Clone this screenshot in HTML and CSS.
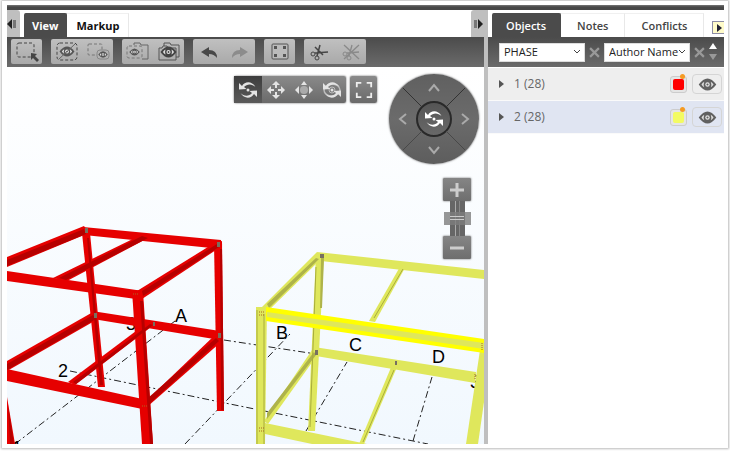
FILE: index.html
```html
<!DOCTYPE html>
<html lang="en">
<head>
<meta charset="utf-8">
<title>Model viewer</title>
<link rel="stylesheet" href="styles.css">
</head>
<body>
<svg class="defs" aria-hidden="true">
  <symbol id="orbit" viewBox="0 0 20 20">
    <path d="M4 6C7 1 14 1 17.500 7C14 3.500 9 3.500 6 7L8.500 9L1 9.500V3Z"/>
    <path d="M16 14C13 19 6 19 2.500 13C6 16.500 11 16.500 14 13L11.500 11L19 10.500V17Z"/>
    <circle cx="10" cy="10" r="1.500"/>
  </symbol>
  <symbol id="eye" viewBox="0 0 20 14">
    <path d="M0.500 7Q10-6 19.500 7Q10 20 0.500 7Z"/>
    <path d="M3.500 7Q4.500 5 6.500 4Q5.300 7 6.500 10Q4.500 9 3.500 7ZM16.500 7Q15.500 5 13.500 4Q14.700 7 13.500 10Q15.500 9 16.500 7Z" fill="#ddd"/>
    <circle cx="10" cy="7" r="2.400" fill="#e4e4e4"/>
    <circle cx="10" cy="7" r="1.100"/>
  </symbol>
</svg>
<div class="frame">
  <div class="topbar"></div>
  <main class="app">
    <section class="model">
      <header class="tabs">
        <button class="collapse left" aria-label="Collapse left panel"><svg width="11" height="12" viewBox="0 0 11 12"><path d="M5 1V11L0 6Z" fill="#222"/><path d="M6 2h3v8H6z" fill="#777"/></svg></button>
        <button class="tab active">View</button>
        <button class="tab">Markup</button>
        <button class="collapse right" aria-label="Collapse right panel"><svg width="11" height="12" viewBox="0 0 11 12"><path d="M1 2h3v8H1z" fill="#777"/><path d="M5 1V11L10 6Z" fill="#222"/></svg></button>
      </header>
      <div class="toolbar">
        <div class="group">
          <button aria-label="Select area"><svg viewBox="0 0 24 20"><rect x="2" y="1" width="17" height="14" rx="2" class="dash"/><path d="M16 11l6 1-2 2 4 4-2 2-4-4-2 2z" fill="#444"/></svg></button>
        </div>
        <div class="group">
          <button aria-label="Hide selected"><svg viewBox="0 0 24 20"><rect x="2" y="1" width="20" height="17" rx="3" class="dash"/><use href="#eye" x="4" y="4" width="16" height="11" fill="#555"/><path d="M4 17L20 2" stroke="#666"/></svg></button>
          <button aria-label="Show selected only"><svg viewBox="0 0 24 20"><rect x="2" y="2" width="14" height="11" rx="1" class="dash soft"/><rect x="11" y="8" width="12" height="9" rx="3" fill="#b3b3b3" stroke="#888"/><use href="#eye" x="12" y="9" width="10" height="7" fill="#555"/></svg></button>
        </div>
        <div class="group">
          <button aria-label="Toggle ghost view"><svg viewBox="0 0 24 20"><path d="M8 3V1h6l1 2h7v14h-6" fill="none" stroke="#666"/><rect x="1" y="4" width="15" height="12" rx="2" class="dash soft"/><use href="#eye" x="3" y="6" width="11" height="8" fill="#555"/></svg></button>
          <button aria-label="Show all"><svg viewBox="0 0 24 20"><path d="M7 4V1h6l1 2h8v12h-3M2 6h3l1-2h4l1 2h8v12H2z" fill="none" stroke="#555"/><use href="#eye" x="3" y="4" width="17" height="12" fill="#444"/></svg></button>
        </div>
        <div class="group">
          <button aria-label="Undo"><svg viewBox="0 0 24 20"><path d="M4 10L12 5V8Q20 8 20 16Q17 12 12 12V15Z" fill="#484848"/></svg></button>
          <button aria-label="Redo"><svg viewBox="0 0 24 20"><path d="M20 10L12 5V8Q4 8 4 16Q7 12 12 12V15Z" fill="#8c8c8c"/></svg></button>
        </div>
        <div class="group">
          <button aria-label="Fit to view"><svg viewBox="0 0 24 20"><rect x="4" y="2" width="16" height="15" rx="1" fill="#bbb" stroke="#555"/><path d="M6 4h3v3H6zM15 4h3v3h-3zM6 12h3v3H6zM15 12h3v3h-3z" fill="#555"/></svg></button>
        </div>
        <div class="group">
          <button aria-label="Clip plane"><svg viewBox="0 0 24 20" fill="none" stroke="#444"><circle cx="5" cy="12" r="2"/><circle cx="9" cy="16" r="2"/><path d="M7 11L20 10M9 14L12 3M7 5l8 8" stroke-width="1.500"/></svg></button>
          <button aria-label="Clear clip planes"><svg viewBox="0 0 24 20" fill="none" stroke="#898989"><circle cx="6" cy="12" r="2"/><circle cx="10" cy="16" r="2"/><path d="M8 11L20 10M10 14L13 3M5 3L20 17M5 17L20 3" stroke-width="1.300"/></svg></button>
        </div>
      </div>
      <div class="viewport">
        <svg class="scene" viewBox="7 67 477 377" preserveAspectRatio="xMinYMin slice" role="img" aria-label="Steel frames of phases 1 and 2">
          <g class="axes">
            <path d="M70 371L220 402L428 444M224 340L316 354M15 444L175 321M185 444L290 334M306 431L347 362M413 441L432 377"/>
          </g>
          <g class="label">
            <text x="175" y="322">A</text><text x="276" y="339">B</text><text x="349" y="351">C</text><text x="432" y="363">D</text><text x="58" y="377">2</text><text x="126" y="330">3</text><text x="12" y="454">1</text><text x="470" y="388">3</text>
          </g>
          <g fill="#e60000">
            <path d="M82 233L90 233L105 387L98 387Z"/>
            <path d="M7 257L84 226L89 233L7 267Z"/>
            <path d="M83 227L221 240V249L84 235Z"/>
            <path d="M53 278L141 235L150 237L67 281Z"/>
            <path d="M7 361L93 312L98 319L7 371Z"/>
            <path d="M92 311L220 331V340L93 319Z"/>
            <path d="M68 382L148 322L155 324L75 385Z"/>
            <path d="M214 243L222 241L224 411L217 411Z"/>
            <path d="M137 291L216 242L222 246L142 299Z"/>
            <path d="M145 402L215 335L221 342L147 407Z"/>
            <path d="M7 369L147 400V410L7 381Z"/>
            <path d="M7 271L143 291V300L7 281Z"/>
            <path d="M132 290L143 291L153 444H142Z"/>
            <path d="M7 397L15 444H7Z"/>
          </g>
          <g fill="#b60000">
            <path d="M7 260L84 229L86 234L7 266Z"/>
            <path d="M59 278L142 236L148 238L66 280Z"/>
            <path d="M7 364L93 315L96 319L7 370Z"/>
            <path d="M73 382L150 324L153 325L76 384Z"/>
            <path d="M142 291L217 244L219 247L143 296Z"/>
            <path d="M148 398L216 338L219 341L148 405Z"/>
            <path d="M87 238L89 238L103 385H100ZM220 249L222 249L224 410H221ZM140 301L143 301L153 444H150ZM8 405L14 444H10Z"/>
          </g>
          <g fill="#dfe75c">
            <path d="M316 254L324 254L315 431L308 431Z"/>
            <path d="M262 307L317 252L323 257L269 310Z"/>
            <path d="M317 252L484 270V279L321 261Z"/>
            <path d="M369 321L401 265L406 266L375 322Z"/>
            <path d="M264 421L312 350L318 354L268 424Z"/>
            <path d="M314 347L476 372L475 383L316 356Z"/>
            <path d="M359 444L392 365L397 367L364 444Z"/>
            <path d="M480 350L484 349V402L478 444H466Z"/>
            <path d="M256 307H267L265 444H256Z"/>
            <path d="M265 423L367 444H312L265 434Z"/>
          </g>
          <path fill="#aeb34a" d="M267 304L316 258L319 259L269 308ZM267 413L314 352L316 355L267 419ZM321 258L324 258L322 308H320Z"/>
          <path d="M374 318L403 269M363 442L394 370M316 267L310 427M257 310V444M264 314L264 444" stroke="#a8ad3c" fill="none"/>
          <path fill="#ffff00" d="M266 307L484 339V353L266 321Z"/>
          <path fill="#dfe75c" d="M267 312L484 343V349L267 317Z"/>
          <g fill="#777060"><path d="M85 228h3v5h-3zM94 313h3v5h-3zM217 242h3v5h-3zM218 333h3v5h-3zM153 322h2v4h-2zM320 254h4v4h-4zM315 350h3v5h-3zM395 361h2v4h-2z"/></g>
          <g fill="none" stroke="#aa6820" stroke-dasharray="1 1"><path d="M133 294h5M142 406h5M259 312h6M259 315h6M259 428h6M259 431h6M482 343v7M475 374v6"/></g>
        </svg>
        <div class="navmodes">
          <div class="modes">
            <button class="on" aria-label="Orbit"><svg viewBox="0 0 20 20"><use href="#orbit"/></svg></button>
            <button aria-label="Pan"><svg viewBox="0 0 20 20"><path d="M10 1L14 5H11V8H9V5H6ZM10 19L6 15H9V12H11V15H14ZM1 10L5 6V9H8V11H5V14ZM19 10L15 14V11H12V9H15V6Z"/></svg></button>
            <button aria-label="Look around"><svg viewBox="0 0 20 20"><path d="M10 1L13 5H7ZM10 19L7 15H13ZM1 10L5 6V14ZM19 10L15 14V6Z"/><circle cx="10" cy="10" r="4" fill="#aaa"/></svg></button>
            <button aria-label="Orbit around point"><svg viewBox="0 0 20 20"><ellipse cx="10" cy="10" rx="8" ry="6" fill="none" stroke="#bbb" stroke-width="1.500"/><circle cx="10" cy="10" r="3" fill="none" stroke="#bbb"/><use href="#orbit"/></svg></button>
          </div>
          <button class="full" aria-label="Full screen"><svg viewBox="0 0 20 20"><path d="M2 7V2H7M13 2H18V7M18 13V18H13M7 18H2V13" fill="none" stroke="#eee" stroke-width="2"/></svg></button>
        </div>
        <div class="wheel">
          <svg class="spokes" viewBox="0 0 90 90"><path d="M14 14L33 33M76 14L57 33" stroke="#333"/><path d="M14 76L33 57M76 76L57 57" stroke="#484848"/></svg>
          <button class="up" aria-label="Rotate up"><svg viewBox="0 0 12 12"><path d="M1 9L6 3L11 9"/></svg></button>
          <button class="lt" aria-label="Rotate left"><svg viewBox="0 0 12 12"><path d="M9 1L3 6L9 11"/></svg></button>
          <button class="hub" aria-label="Reset rotation"><svg viewBox="0 0 20 20"><use href="#orbit"/></svg></button>
          <button class="rt" aria-label="Rotate right"><svg viewBox="0 0 12 12"><path d="M3 1L9 6L3 11"/></svg></button>
          <button class="dn" aria-label="Rotate down"><svg viewBox="0 0 12 12"><path d="M1 3L6 9L11 3"/></svg></button>
        </div>
        <div class="zoom">
          <button aria-label="Zoom in"><svg viewBox="0 0 14 14"><path d="M7 0V14M0 7H14"/></svg></button>
          <div class="track"><span class="thumb"></span></div>
          <button aria-label="Zoom out"><svg viewBox="0 0 14 14"><path d="M0 7H14"/></svg></button>
        </div>
      </div>
    </section>
    <aside class="panel">
      <header class="tabs">
        <button class="tab active">Objects</button>
        <button class="tab">Notes</button>
        <button class="tab">Conflicts</button>
        <button class="more" aria-label="More tabs"><svg width="5" height="8" viewBox="0 0 5 8"><path d="M0 0L5 4L0 8Z" fill="#223"/></svg></button>
      </header>
      <div class="filters">
        <label class="pick"><select aria-label="Group by"><option>PHASE</option></select><svg viewBox="0 0 8 6"><path d="M1 1L4 4L7 1"/></svg></label>
        <button class="clear" aria-label="Clear first grouping"><svg viewBox="0 0 10 10"><path d="M1 1L9 9M9 1L1 9"/></svg></button>
        <label class="pick"><select aria-label="Then by"><option>Author Name</option></select><svg viewBox="0 0 8 6"><path d="M1 1L4 4L7 1"/></svg></label>
        <button class="clear" aria-label="Clear second grouping"><svg viewBox="0 0 10 10"><path d="M1 1L9 9M9 1L1 9"/></svg></button>
        <button class="sort" aria-label="Sort"><svg viewBox="0 0 8 18"><path d="M4 0L8 6H0Z" fill="#fff"/><path d="M4 17L0 11H8Z" fill="#999"/></svg></button>
      </div>
      <ul class="groups">
        <li><button class="expand" aria-label="Expand 1"><svg viewBox="0 0 5 8"><path d="M0 0L5 4L0 8Z"/></svg></button><span class="name">1 (28)</span><button class="swatch red" aria-label="Colour of 1"></button><button class="visible" aria-label="Show or hide 1"><svg viewBox="0 0 20 14"><use href="#eye"/></svg></button></li>
        <li class="selected"><button class="expand" aria-label="Expand 2"><svg viewBox="0 0 5 8"><path d="M0 0L5 4L0 8Z"/></svg></button><span class="name">2 (28)</span><button class="swatch yellow" aria-label="Colour of 2"></button><button class="visible" aria-label="Show or hide 2"><svg viewBox="0 0 20 14"><use href="#eye"/></svg></button></li>
      </ul>
    </aside>
  </main>
</div>
</body>
</html>
```
FILE: styles.css
```css
* { box-sizing: border-box; }
body {
  margin: 0;
  height: 100vh;
  padding: 1px 2px 3px;
  display: flex;
  background: #fff;
  font: 12px/16px "Open Sans", "Noto Sans", sans-serif;
  color: #444;
}
button { border: 0; padding: 0; margin: 0; background: none; font: inherit; color: inherit; }
svg { display: block; }
.defs { position: absolute; width: 0; height: 0; }

.frame {
  flex: 1;
  min-width: 0;
  display: flex;
  flex-direction: column;
  padding: 4px 4px 4px 5px;
  background: #fff;
  box-shadow: 0 0 2px 1px #bbb;
}
.topbar { height: 5px; flex: none; background: linear-gradient(#777, #474747 40%); }
.app { flex: 1; min-height: 0; display: grid; grid-template: minmax(0, 1fr) / minmax(0, 477fr) minmax(0, 240fr); }
.model { min-width: 0; display: flex; flex-direction: column; }
.panel { min-width: 0; border-left: 4px solid #bfbfbf; }

.tabs { display: flex; align-items: flex-end; height: 27px; flex: none; }
.tab { height: 24px; font-size: 11px; font-weight: 600; border-right: 1px solid #e8e8e8; border-top: 1px solid #f0f0f0; padding: 0 16px; }
.model .tab { color: #111; font-weight: 700; padding: 0 8px; }
.model .tab + .tab { padding: 0 9px; }
.tab.active, .model .tab.active { background: #4b4b4b; border-color: #4b4b4b; color: #fff; border-radius: 2px 2px 0 0; }
.collapse { width: 13px; height: 27px; background: #bfbfbf; }
.collapse.left { border-radius: 0 3px 0 0; margin-right: 4px; }
.collapse.right { margin-left: auto; border-radius: 3px 0 0 0; }
.collapse.right svg { margin-left: 2px; }
.panel .tabs { padding-left: 4px; }
.panel .tab.active { padding: 0 14px; }
.more { margin-left: auto; width: 12px; height: 13px; margin-bottom: 3px; padding-left: 4px; background: #fffbc9; border: 1px solid #8d8da5; border-right: 0; }

.toolbar, .filters { height: 30px; flex: none; display: flex; align-items: center; background: linear-gradient(#4b4b4b, #6b6b6b); }
.toolbar { gap: 9px; padding: 0 4px 1px; }
.group { display: flex; height: 25px; border-radius: 2px; background: linear-gradient(#c0c0c0, #a9a9a9); }
.group button { width: 31px; height: 25px; display: flex; align-items: center; justify-content: center; }
.group svg { width: 24px; height: 20px; }
.dash { fill: none; stroke: #444; stroke-width: 1; stroke-dasharray: 3 2; }
.dash.soft { stroke: #777; }

.viewport { position: relative; flex: 1; min-height: 0; overflow: hidden; background: linear-gradient(#fff, #f1f8fe); }
.scene { width: 100%; height: 100%; }
.axes { fill: none; stroke: #222; stroke-width: 1; stroke-dasharray: 7 3 2 3; }
.label { font: 18px "Liberation Sans", Arial, sans-serif; fill: #000; }

.navmodes { position: absolute; top: 9px; right: 107px; display: flex; gap: 4px; }
.modes { display: flex; border-radius: 2px; background: linear-gradient(#8a8a8a, #6a6a6a); box-shadow: 0 0 2px #555; }
.modes button, .full { width: 27px; height: 27px; display: grid; place-items: center; fill: #e4e4e4; }
.modes button { width: 28px; }
.modes .on { background: linear-gradient(#3d3d3d, #5a5a5a); }
.modes svg, .hub svg { width: 20px; height: 20px; }
.full { border-radius: 2px; background: linear-gradient(#8a8a8a, #6a6a6a); box-shadow: 0 0 2px #555; }
.full svg { width: 20px; height: 18px; }

.wheel {
  position: absolute; top: 7px; right: 5px; width: 90px; height: 90px;
  display: grid; grid-template: 28px 34px 28px / 28px 34px 28px; place-items: center;
  border-radius: 50%; background: linear-gradient(#606060, #6b6b6b 50%, #5d5d5d); box-shadow: 0 0 2px #555;
}
.spokes { position: absolute; inset: 0; }
.wheel button svg { width: 12px; height: 12px; fill: none; stroke: #aaa; stroke-width: 2; }
.up { grid-area: 1 / 2; }
.lt { grid-area: 2 / 1; }
.hub { grid-area: 2 / 2; width: 36px; height: 36px; display: grid; place-items: center; border: 2px solid #292929; border-radius: 50%; background: linear-gradient(#555, #686868); }
.wheel .hub svg { width: 20px; height: 20px; fill: #fff; stroke: none; }
.rt { grid-area: 2 / 3; }
.dn { grid-area: 3 / 2; }

.zoom { position: absolute; top: 111px; right: 13px; width: 28px; display: flex; flex-direction: column; align-items: center; }
.zoom button { width: 28px; height: 23px; display: grid; place-items: center; background: linear-gradient(#858585, #6e6e6e); box-shadow: 0 0 2px #555; border-radius: 1px; }
.zoom button svg { width: 14px; height: 14px; stroke: #ccc; stroke-width: 3; }
.track { position: relative; width: 15px; height: 35px; background: linear-gradient(90deg, #666 5px, #aaa 5px 6px, #666 6px 9px, #888 9px 10px, #666 10px); }
.thumb { position: absolute; left: -6px; right: -6px; top: 11px; height: 13px; background: linear-gradient(#ccc, #ccc) center 4px / 14px 1px no-repeat, linear-gradient(#ccc, #ccc) center 7px / 14px 1px no-repeat, rgba(125,125,125,.8); }

.filters { padding: 0 7px 0 11px; gap: 4px; }
.pick { position: relative; flex: 1 1 0; min-width: 0; }
.pick select { display: block; appearance: none; width: 100%; height: 19px; border: 1px solid #ddd; border-radius: 0; background: #fff; padding: 0 0 0 4px; font: inherit; font-size: 11px; color: #222; }
.pick svg { position: absolute; right: 4px; top: 6px; width: 8px; height: 6px; fill: none; stroke: #444; }
.clear, .clear svg { width: 11px; height: 11px; fill: none; stroke: #999; stroke-width: 2; }
.sort, .sort svg { width: 8px; height: 18px; }

.groups { list-style: none; margin: 0; padding: 1px 0 0; }
.groups li { display: flex; align-items: center; height: 33px; padding: 0 2px 0 11px; background: #eee; border-bottom: 1px solid #fafafa; color: #666; }
.groups li.selected { background: #e0e5f2; }
.expand svg { width: 5px; height: 8px; fill: #555; }
.name { margin-left: 10px; flex: 1; }
.swatch { position: relative; width: 17px; height: 17px; border: 1px solid #ccc; border-radius: 3px; margin-right: 5px; background: #e5e5e5; }
.swatch::before { content: ""; position: absolute; inset: 2px; border-radius: 2px; }
.swatch.red::before { background: #f00; }
.swatch.yellow::before { background: #f3fb62; }
.swatch::after { content: ""; position: absolute; top: -3px; right: 1px; width: 5px; height: 5px; border-radius: 50%; background: #f59b23; }
.visible { width: 30px; height: 20px; display: grid; place-items: center; border: 1px solid #d5d5d5; border-radius: 4px; fill: #606060; }
.visible svg { width: 19px; height: 13px; }
```
